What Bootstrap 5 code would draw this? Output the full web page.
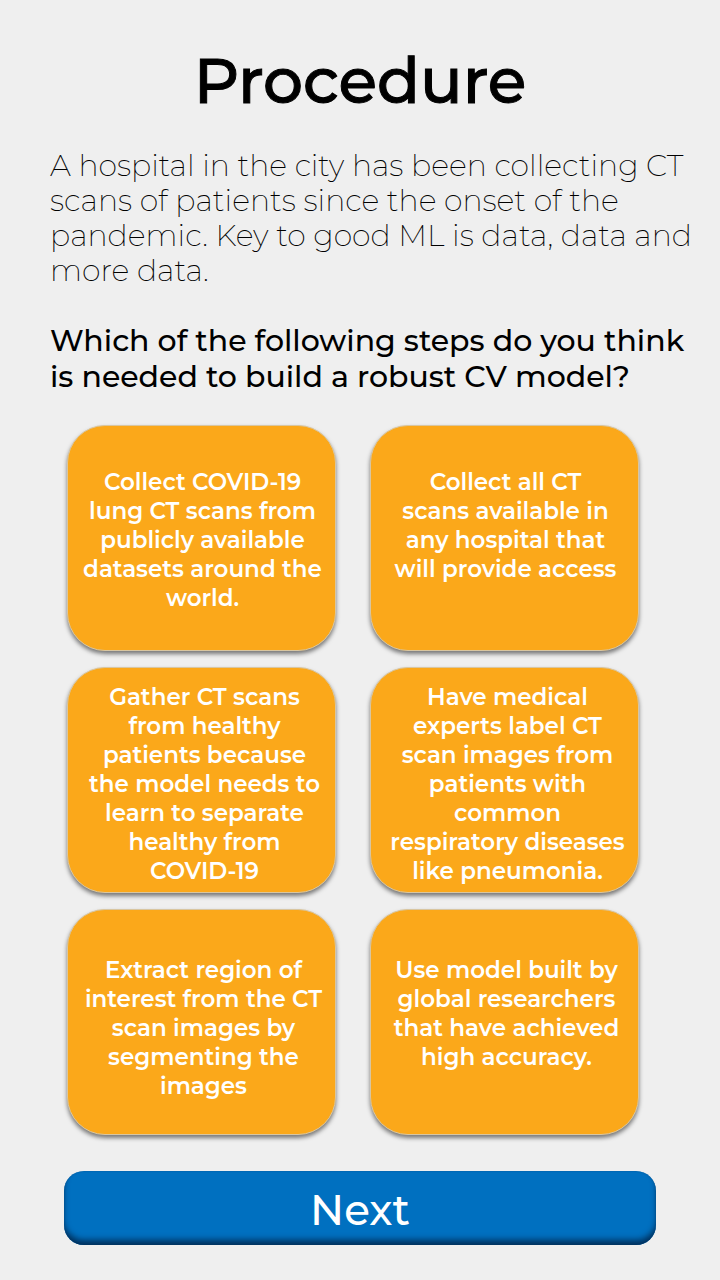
<!DOCTYPE html>
<html lang="en">
<head>
<meta charset="utf-8">
<meta name="viewport" content="width=device-width, initial-scale=1">
<title>Procedure</title>
<link href="https://cdn.jsdelivr.net/npm/bootstrap@5.3.0/dist/css/bootstrap.min.css" rel="stylesheet">
<style>
  body { background: #efefef; color: #000; font-family: Montserrat, Inter, sans-serif; }
  .page-title { font-size: 63px; font-weight: 500; line-height: 80px; padding-top: 41px; margin-bottom: 27px; -webkit-text-stroke: 1px #000; }
  .intro { padding: 0 28px 0 50px; }
  .intro p { font-size: 30px; line-height: 35px; font-weight: 200; margin-bottom: 35px; }
  .intro h2 { font-size: 30px; line-height: 36px; font-weight: 500; margin-bottom: 30px; }
  .steps-area { padding: 0 81px 0 67px; }
  .steps-area > .row { --bs-gutter-x: 34px; --bs-gutter-y: 16px; }
  .step { min-height: 226px; border: 1px solid #d9c6a0; border-radius: 38px; background: #fba81a; color: #fff;
    font-size: 23px; font-weight: 600; line-height: 29px; padding: 42px 12px 2px 14px; box-shadow: 0 3px 4px rgba(0,0,0,.5); }
  .step-long { padding: 15px 8px 2px 14px; }
  .step-low { padding: 46px 8px 2px 12px; }
  .step:hover, .step:active { background: #f39c0c; color: #fff; }
  .next-area { padding: 36px 64px 35px; }
  .next { height: 74px; border: 0; border-radius: 20px; background: #0070c0; color: #fff; font-size: 42px; font-weight: 500; line-height: 60px;
    padding: 4px 0 0; box-shadow: inset 0 -6px 6px -1px #00305c, inset 0 0 2px #005a9c; }
  .next:hover { background: #0067b2; color: #fff; }
</style>
</head>
<body>
<main>
  <h1 class="page-title text-center">Procedure</h1>
  <section class="intro">
    <p>A hospital in the city has been collecting CT<br>scans of patients since the onset of the<br>pandemic. Key to good ML is data, data and<br>more data.</p>
    <h2>Which of the following steps do you think<br>is needed to build a robust CV model?</h2>
  </section>
  <section class="steps-area">
    <div class="row">
      <div class="col-6"><button type="button" class="btn step w-100 h-100 d-flex justify-content-center"><span>Collect COVID-19<br>lung CT scans from<br>publicly available<br>datasets around the<br>world.</span></button></div>
      <div class="col-6"><button type="button" class="btn step w-100 h-100 d-flex justify-content-center"><span>Collect all CT<br>scans available in<br>any hospital that<br>will provide access</span></button></div>
      <div class="col-6"><button type="button" class="btn step step-long w-100 h-100 d-flex justify-content-center"><span>Gather CT scans<br>from healthy<br>patients because<br>the model needs to<br>learn to separate<br>healthy from<br>COVID-19</span></button></div>
      <div class="col-6"><button type="button" class="btn step step-long w-100 h-100 d-flex justify-content-center"><span>Have medical<br>experts label CT<br>scan images from<br>patients with<br>common<br>respiratory diseases<br>like pneumonia.</span></button></div>
      <div class="col-6"><button type="button" class="btn step step-low w-100 h-100 d-flex justify-content-center"><span>Extract region of<br>interest from the CT<br>scan images by<br>segmenting the<br>images</span></button></div>
      <div class="col-6"><button type="button" class="btn step step-low w-100 h-100 d-flex justify-content-center"><span>Use model built by<br>global researchers<br>that have achieved<br>high accuracy.</span></button></div>
    </div>
  </section>
  <div class="next-area"><button type="button" class="btn next w-100">Next</button></div>
</main>
<script src="https://cdn.jsdelivr.net/npm/bootstrap@5.3.0/dist/js/bootstrap.bundle.min.js"></script>
</body>
</html>
